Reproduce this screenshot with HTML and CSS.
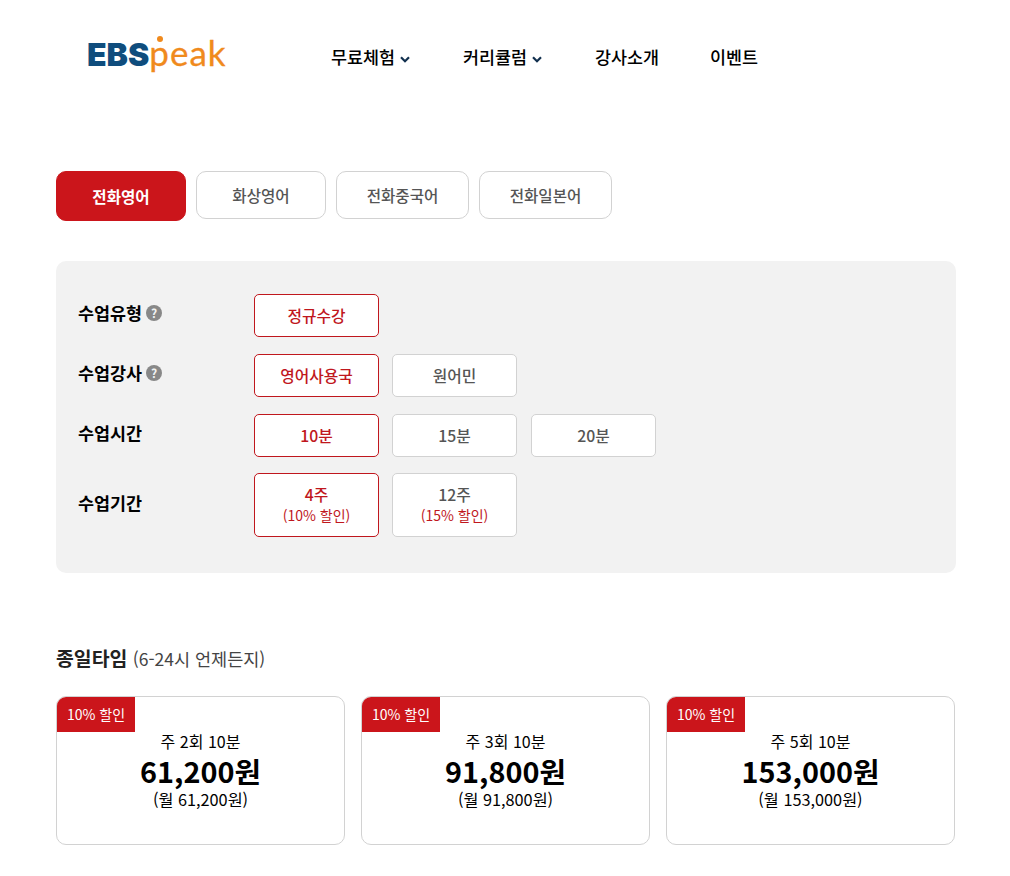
FILE: index.html
```html
<!DOCTYPE html>
<html lang="ko">
<head>
    <meta charset="UTF-8">
    <meta name="viewport" content="width=device-width, initial-scale=1.0">
    <title>EBSpeak</title>
    <link rel="stylesheet" href="styles.css">
</head>
<body>
    <header class="header">
        <a class="logo"><span class="logo-ebs">EBS</span><span class="logo-peak">peak</span><i class="logo-dot"></i></a>
        <nav class="nav">
            <a class="nav-item nav-first">무료체험
                <svg class="chevron" viewBox="0 0 10 7"><path d="M1 1.2 5 5.2 9 1.2" fill="none" stroke="#12304f" stroke-width="2.2"/></svg>
            </a>
            <a class="nav-item nav-second">커리큘럼
                <svg class="chevron" viewBox="0 0 10 7"><path d="M1 1.2 5 5.2 9 1.2" fill="none" stroke="#12304f" stroke-width="2.2"/></svg>
            </a>
            <a class="nav-item nav-third">강사소개</a>
            <a class="nav-item">이벤트</a>
        </nav>
    </header>

    <main class="content">
        <div class="tabs">
            <button class="tab tab-active">전화영어</button>
            <button class="tab">화상영어</button>
            <button class="tab tab-wide">전화중국어</button>
            <button class="tab tab-wide">전화일본어</button>
        </div>

        <section class="panel">
            <div class="row">
                <div class="row-label">수업유형 <span class="help">?</span></div>
                <div class="options">
                    <button class="option selected">정규수강</button>
                </div>
            </div>
            <div class="row">
                <div class="row-label">수업강사 <span class="help">?</span></div>
                <div class="options">
                    <button class="option selected">영어사용국</button>
                    <button class="option">원어민</button>
                </div>
            </div>
            <div class="row">
                <div class="row-label">수업시간</div>
                <div class="options">
                    <button class="option selected">10분</button>
                    <button class="option">15분</button>
                    <button class="option option-last">20분</button>
                </div>
            </div>
            <div class="row row-tall">
                <div class="row-label">수업기간</div>
                <div class="options">
                    <button class="option option-tall selected">4주<small>(10% 할인)</small></button>
                    <button class="option option-tall">12주<small>(15% 할인)</small></button>
                </div>
            </div>
        </section>

        <h2 class="section-title">종일타임 <span>(6-24시 언제든지)</span></h2>

        <div class="cards">
            <div class="card">
                <span class="badge">10% 할인</span>
                <p class="card-name">주 2회 10분</p>
                <p class="card-price">61,200원</p>
                <p class="card-month">(월 61,200원)</p>
            </div>
            <div class="card">
                <span class="badge">10% 할인</span>
                <p class="card-name">주 3회 10분</p>
                <p class="card-price">91,800원</p>
                <p class="card-month">(월 91,800원)</p>
            </div>
            <div class="card">
                <span class="badge">10% 할인</span>
                <p class="card-name">주 5회 10분</p>
                <p class="card-price">153,000원</p>
                <p class="card-month">(월 153,000원)</p>
            </div>
        </div>
    </main>
</body>
</html>
```

FILE: styles.css
```css
* {
    box-sizing: border-box;
}

body {
    margin: 0;
    height: 876px;
    overflow: hidden;
    background-color: #fff;
    color: #000;
    font-family: "Noto Sans CJK KR", "Noto Sans", sans-serif;
}

button {
    font-family: inherit;
    cursor: pointer;
}

.header {
    display: flex;
    align-items: flex-start;
    height: 171px;
    padding: 30px 0 0 87px;
}

.logo {
    position: relative;
    display: flex;
    align-items: baseline;
    width: 244px;
    height: 44px;
}

.logo-ebs {
    color: #0f4d7d;
    font-family: "Inter", sans-serif;
    font-size: 32px;
    font-weight: 900;
    line-height: 44px;
}

.logo-peak {
    color: #f08a1d;
    font-family: "Lato", sans-serif;
    font-size: 35px;
    letter-spacing: 1px;
    line-height: 44px;
    -webkit-text-stroke: 0.3px #f08a1d;
}

.logo-dot {
    position: absolute;
    left: 70px;
    top: 6px;
    width: 6px;
    height: 6px;
    border-radius: 50%;
    background-color: #f08a1d;
}

.nav {
    display: flex;
    padding-top: 13px;
}

.nav-item {
    display: flex;
    align-items: center;
    gap: 5px;
    font-size: 17.4px;
    font-weight: 500;
    line-height: 28px;
}

.nav-first,
.nav-second {
    width: 132px;
}

.nav-third {
    width: 115px;
}

.chevron {
    width: 10px;
    height: 7px;
    margin-top: 4px;
}

.content {
    padding: 0 54px 0 56px;
}

.tabs {
    display: flex;
    align-items: flex-start;
    gap: 10px;
}

.tab {
    width: 130px;
    height: 48px;
    padding: 0;
    border: 1px solid #d2d2d2;
    border-radius: 10px;
    background-color: #fff;
    color: #555;
    font-size: 15.6px;
    font-weight: 500;
}

.tab-wide {
    width: 133px;
}

.tab-active {
    height: 50px;
    border-color: #cb151b;
    background-color: #cb151b;
    color: #fff;
    font-weight: 700;
}

.panel {
    display: flex;
    flex-direction: column;
    gap: 17px;
    width: 900px;
    height: 312px;
    margin-top: 40px;
    padding: 33px 22px;
    border-radius: 10px;
    background-color: #f2f2f2;
}

.row {
    display: flex;
    align-items: center;
}

.row-tall {
    margin-top: -1px;
}

.row-label {
    display: flex;
    align-items: center;
    gap: 4px;
    width: 176px;
    padding-bottom: 6px;
    font-size: 17.4px;
    font-weight: 700;
}

.help {
    width: 16px;
    height: 16px;
    border-radius: 50%;
    background-color: #888;
    color: #f2f2f2;
    font-size: 12px;
    font-weight: 700;
    line-height: 16px;
    text-align: center;
}

.options {
    display: flex;
    gap: 13px;
}

.option {
    width: 125px;
    height: 43px;
    padding: 0 0 1px;
    border: 1px solid #d2d2d2;
    border-radius: 5px;
    background-color: #fff;
    color: #555;
    font-size: 15.8px;
    font-weight: 500;
}

.option-last {
    margin-left: 1px;
}

.option.selected {
    border-color: #c0171d;
    color: #c0171d;
}

.option-tall {
    height: 64px;
    padding: 0;
    line-height: 21px;
}

.option small {
    display: block;
    color: #c0171d;
    font-size: 14px;
    font-weight: 400;
}

.section-title {
    margin: 71px 0 0;
    font-size: 19.4px;
    font-weight: 700;
    line-height: 28px;
    color: #222;
}

.section-title span {
    color: #444;
    font-size: 17.5px;
    font-weight: 400;
}

.cards {
    display: flex;
    gap: 16px;
    margin-top: 23px;
}

.card {
    position: relative;
    width: 289px;
    height: 149px;
    padding-top: 31px;
    border: 1px solid #d2d2d2;
    border-radius: 10px;
    text-align: center;
}

.badge {
    position: absolute;
    left: 0;
    top: 0;
    width: 78px;
    height: 35px;
    border-top-left-radius: 9px;
    background-color: #cb151b;
    color: #fff;
    font-size: 14px;
    line-height: 35px;
}

.card p {
    margin: 0;
}

.card-name {
    font-size: 16px;
    line-height: 26px;
}

.card-price {
    font-size: 28.8px;
    font-weight: 700;
    line-height: 33px;
}

.card-month {
    font-size: 16.3px;
    line-height: 24px;
}
```
